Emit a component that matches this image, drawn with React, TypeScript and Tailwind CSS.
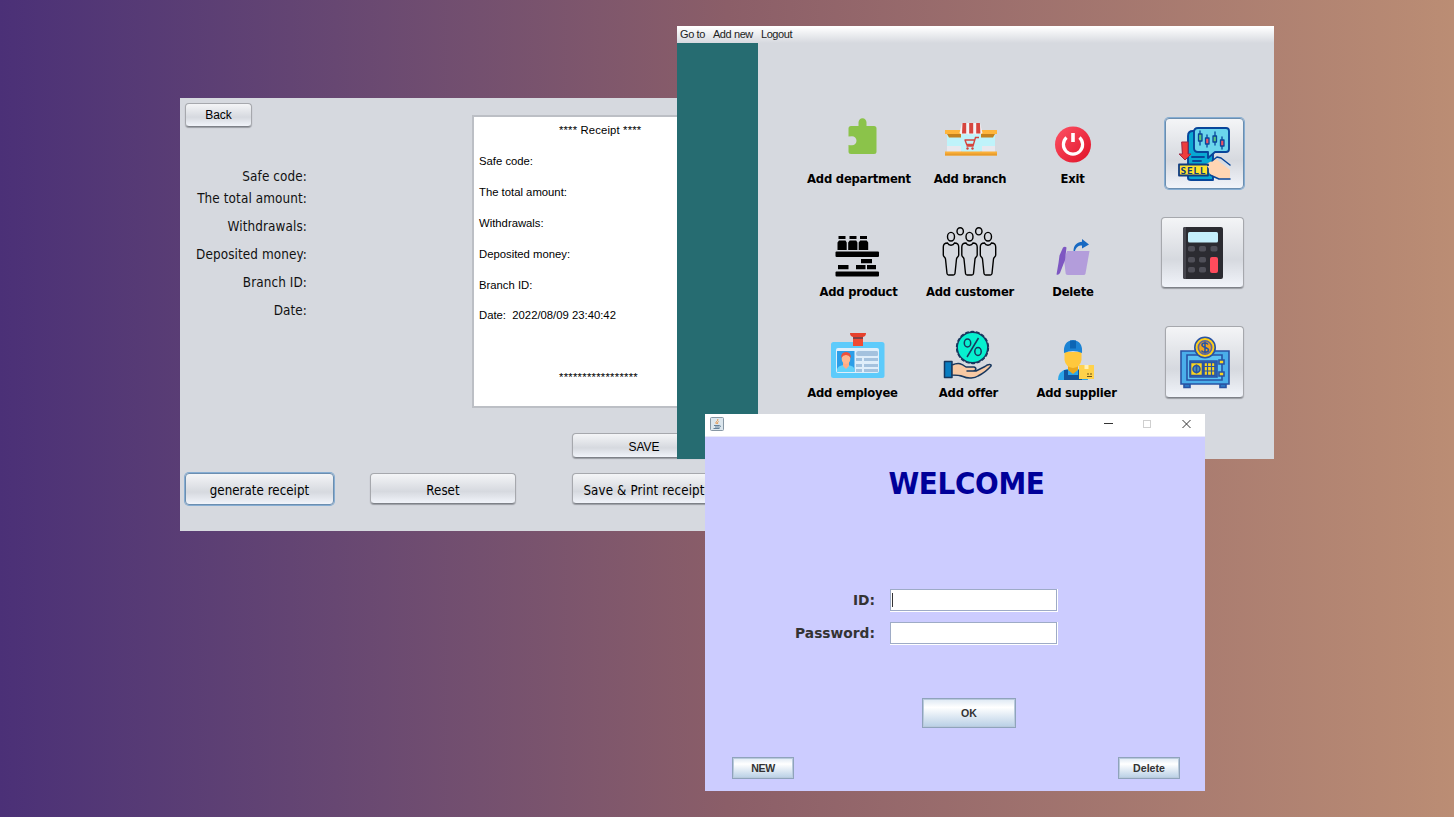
import type { ReactNode } from "react";

const tahoma = "font-['DejaVu_Sans_Condensed','DejaVu_Sans',sans-serif] [font-stretch:condensed]";
const tahomaBold = "font-['DejaVu_Sans',sans-serif] font-bold";
const arial = "font-['Liberation_Sans',sans-serif]";

function NimbusButton({ children, className, focused = false }: { children: ReactNode; className: string; focused?: boolean }) {
  const frame = focused
    ? "border-[#6b8eb0] shadow-[0_0_0_1px_#86add2]"
    : "border-[#a6a8ad] border-b-[#7e8188] shadow-[0_1px_1px_#9a9da3]";
  return (
    <button
      className={`flex shrink-0 items-center justify-center whitespace-nowrap rounded-[4px] border bg-linear-to-b from-[#f4f5f7] via-[#d6d9df] via-60% to-[#f1f4fa] text-black ${frame} ${className}`}
    >
      {children}
    </button>
  );
}

function MetalButton({ children, className }: { children: ReactNode; className: string }) {
  return (
    <button
      className={`flex items-center justify-center border border-[#8fa3bb] bg-linear-to-b from-[#dde8f3] via-white via-30% to-[#b8cfe5] pt-[2px] text-[10.6px] font-bold text-[#333333] shadow-[inset_0_0_0_1px_#b9cadc] ${arial} ${className}`}
    >
      {children}
    </button>
  );
}

const fields = [
  { label: "Safe code:", row: "h-[22px]" },
  { label: "The total amount:", row: "h-[22px] mb-[3px]" },
  { label: "Withdrawals:", row: "h-7" },
  { label: "Deposited money:", row: "h-7" },
  { label: "Branch ID:", row: "h-7" },
  { label: "Date:", row: "h-7" },
];

const receiptLines = [
  "Safe code:",
  "The total amount:",
  "Withdrawals:",
  "Deposited money:",
  "Branch ID:",
  "Date:  2022/08/09 23:40:42",
];

function ReceiptWindow() {
  return (
    <section className={`absolute left-[180px] top-[98px] flex h-[433px] w-[538px] flex-col bg-[#d6d9df] ${tahoma}`}>
      <div className="flex h-[328px]">
        <div className="w-[292px] pl-[5px] pt-[5px]">
          <NimbusButton className={`h-6 w-[67px] text-[12px] ${arial}`}>Back</NimbusButton>
          <div className="mt-[39px] w-[122px] text-right text-[13.4px] tracking-[0.1px] text-[#111]">
            {fields.map((f) => (
              <div key={f.label} className={`flex items-center justify-end whitespace-nowrap ${f.row}`}>
                {f.label}
              </div>
            ))}
          </div>
        </div>
        <div className={`mt-[17px] h-[293px] flex-1 border-2 border-[#bcbfc5] bg-white pl-[5px] text-[11.3px] text-black ${arial}`}>
          <div className="mb-[2px] flex h-[27px] items-center pl-[80px] tracking-[0.15px]">**** Receipt ****</div>
          {receiptLines.map((l) => (
            <div key={l} className="flex h-[30.9px] items-center whitespace-pre">
              {l}
            </div>
          ))}
          <div className="mt-[31px] flex h-[30px] items-center pl-[80px] tracking-[0.25px]">*****************</div>
        </div>
      </div>
      <div className="mt-[7px] flex justify-end pr-[2px]">
        <NimbusButton className={`h-[25px] w-[144px] pt-[2px] text-[12px] ${arial}`}>SAVE</NimbusButton>
      </div>
      <div className="mt-[15px] flex pl-[5px] text-[13.2px] tracking-[0.05px]">
        <NimbusButton focused className="h-8 w-[149px] pt-[3px]">generate receipt</NimbusButton>
        <NimbusButton className="ml-[36px] h-[31px] w-[146px] pt-[4px]">Reset</NimbusButton>
        <NimbusButton className="ml-[56px] h-[31px] w-[144px] pt-[4px] tracking-[0.15px]">Save &amp; Print receipt</NimbusButton>
      </div>
    </section>
  );
}

/* Each icon uses the drawing area of its grid cell: 112 x 56 with the cell centre at x = 56. */
function Puzzle() {
  return (
    <g fill="#8bc34a">
      <path d="M48 16h7.500V12.500a4 4.300 0 1 1 8 0V16H71q2.500 0 2.500 2.500v23Q73.500 44 71 44H48q-2.500 0-2.500-2.500V35q1 .2 3.500.2a4.500 4.500 0 1 0 0-9q-2.500 0-3.500.3v-8Q45.500 16 48 16z" />
    </g>
  );
}

function Store() {
  return (
    <g>
      <path d="M33 23h48v18H33z" fill="#bff3fa" />
      <path d="M33 36h14v6H33zM68 36h13v6H68z" fill="#e8e8ee" />
      <path d="M31 20h52v4H31z" fill="#ffb53b" />
      <path d="M33 24h14v3.500H35zM67 24h14l-2 3.500H67z" fill="#c4821d" />
      <path d="M48 23h18v19H48z" fill="#bff3fa" />
      <path d="M48 13h18l2.500 10q-2 2-4 .5-2 2-4 0-2 2-3.500 0-2 2-4 0-2 2-4 0-2 1.500-3.500-.5z" fill="#f4f2f5" />
      <path d="M48.500 13h3.700v10.500h-4.200zM55.200 13h4v10.500h-4zM62.200 13h3.700l.5 10.500h-4.200z" fill="#d6453e" />
      <g fill="none" stroke="#d6453e" strokeWidth="1.400">
        <path d="M65 27.500h-3.500L59 36h-6.500M50.500 30H61M51 30l1.700 4.500h6.700" />
      </g>
      <circle cx="53.500" cy="38.500" r="1.200" fill="#d6453e" />
      <circle cx="58.500" cy="38.500" r="1.200" fill="#d6453e" />
      <path d="M31 41.500h52v4H31z" fill="#fab03a" />
      <path d="M31 43.500h52v2H31z" fill="#e89c2c" />
    </g>
  );
}

function Power() {
  return (
    <g>
      <defs>
        <linearGradient id="power" x1="0" y1="0" x2="1" y2="1">
          <stop offset="0" stopColor="#fd5265" />
          <stop offset="1" stopColor="#e01227" />
        </linearGradient>
      </defs>
      <circle cx="57" cy="34.500" r="18" fill="url(#power)" />
      <path d="M50.500 27.500a9.600 9.600 0 1 0 13 0" fill="none" stroke="#fff" strokeWidth="3.200" />
      <path d="M57 23v9" stroke="#fff" strokeWidth="3.600" />
    </g>
  );
}

function Shelf() {
  return (
    <g fill="#000">
      <path d="M35.500 13h7v3h-7zM46.500 13h7v3h-7zM57 13h7v3h-7zM36 17.500h6.500l1.200 2V27H34.500v-7.500zM46.700 17.500h6.500l1.200 2V27h-9.200v-7.500zM57.200 17.500h6.500l1.500 2V27h-9.500v-7.500z" />
      <rect x="32.500" y="28.500" width="43.500" height="5.500" rx="1" />
      <rect x="32.500" y="48.500" width="43.500" height="5" rx="1" />
      <path d="M58 36h11v4.300H58zM35 42h10.500v4.300H35zM53 42h9.500v4.300H53zM64 42h9v4.300h-9z" />
    </g>
  );
}

const PERSON = "M-3.500 20c-3 0-4.200 1-4.200 4v8c0 2 1.700 2 2.200 4l1.500 14.500q.2 1.500 1.600 1.500h4.800q1.400 0 1.600-1.500L5.500 36c.5-2 2.200-2 2.200-4v-8c0-3-1.200-4-4.200-4q-1 2.200-3.500 2.200T-3.500 20z";

function People() {
  return (
    <g fill="none" stroke="#000" strokeWidth="1.400">
      {[37, 55.5, 74].map((x) => (
        <g key={x} transform={`translate(${x} 0)`}>
          <path d={PERSON} />
          <ellipse cx="0" cy="13.700" rx="3.500" ry="4.300" />
        </g>
      ))}
      <ellipse cx="46.200" cy="8.300" rx="3.200" ry="3.600" />
      <ellipse cx="64.800" cy="8.300" rx="3.200" ry="3.600" />
    </g>
  );
}

function Bin() {
  return (
    <g>
      <path d="M47 28h26.500l-4 22.500q-.3 1.500-2 1.500H52q-2 0-2.300-1.500z" fill="#b39ddb" />
      <path d="M45 28h6l-3 9-2 11z" fill="#d6d9df" />
      <path d="M47 24.500q2-1.500 3.500 0L49 37l-5 13q-1.500 2.500-3.500 1.500L42.500 40l1-7.500z" fill="#7e57c2" />
      <path d="M57.500 28c0-6 4-9 8.500-9.300V16l7 5.500-7 4v-3c-4 0-6 2-7 5.500z" fill="#1769c2" />
    </g>
  );
}

function Badge() {
  return (
    <g>
      <rect x="28" y="12" width="53.500" height="36" rx="2.500" fill="#5dcbfb" />
      <rect x="33" y="18" width="43" height="25" rx="2" fill="#dfeefa" />
      <path d="M34 21h17.500v21H34z" fill="#2c9ee8" />
      <path d="M34 42v-3q1-3 6-4h5q6 1 6.500 4v3z" fill="#62d2fa" />
      <path d="M40 32h6v4l-3 3-3-3z" fill="#ffab85" />
      <ellipse cx="43" cy="29" rx="4.300" ry="5" fill="#ffb68f" />
      <path d="M38 28q0-6 5-6t5 6q-2-3-5-3t-5 3z" fill="#f0503b" />
      <path d="M55 21h19q1 0 1 2v2q0 1-1 1H55q-2 0-2-2.500T55 21zM53 28h6v3h-6zM61 28h14v3H61zM53 34h6v3h-6zM61 34h14v3H61zM53 39h6v3h-6zM61 39h14v3H61z" fill="#a4c2de" />
      <path d="M50 6h10v10H50z" fill="#f04b34" />
      <path d="M47 3h16q0 4-4 4h-8q-4 0-4-4z" fill="#e6402c" />
      <path d="M50 7h10v2H50z" fill="#814247" />
    </g>
  );
}

function Offer() {
  return (
    <g stroke="#17375e" strokeWidth="1.500" strokeLinejoin="round">
      <circle cx="58.500" cy="17.500" r="15.300" fill="#07f0cf" />
      <circle cx="58.500" cy="17.500" r="16" fill="none" strokeWidth="1.300" strokeDasharray="4 1.600" />
      <path d="M64.500 8L53 27" />
      <ellipse cx="53.500" cy="13" rx="3.200" ry="4" fill="none" />
      <ellipse cx="64" cy="21.500" rx="3.200" ry="4" fill="none" />
      <path d="M30.500 31.500h7.500v16h-7.500z" fill="#087dc1" />
      <path d="M38 35c7-3 10-1 14 2h8c3 1 2 4-1 4h-6 9l9-4.500c3-2.500 7-2.500 6-.5-5 6-9 8-13 10-3 2-10 3-15 .5-4-1.500-7-1.500-11-1.500z" fill="#f7c9a4" />
    </g>
  );
}

function Supplier() {
  return (
    <g>
      <path d="M42 50q0-9 9-11h13q8 2 8 11z" fill="#2ba6e8" />
      <path d="M48 40h4v5h10v-5h4v10H48z" fill="#12559c" />
      <path d="M52 33h10v7l-5 4-5-4z" fill="#eba81e" />
      <path d="M48.500 22h17v8q-1 7-8.500 8-7.500-1-8.500-8z" fill="#ffc83d" />
      <path d="M48 23q-1-12 9-13 10 1 9 13-9-4-18 0z" fill="#1c83d4" />
      <path d="M54 10.500h6v8h-6z" fill="#0c65b4" />
      <path d="M63 35h15v14H63z" fill="#ffd24b" />
      <path d="M68.500 35h4v4h-4z" fill="#fff0b5" />
      <path d="M71 46.500h5M72 43v2M75 43v2" stroke="#6e5217" />
    </g>
  );
}

type Action = { label: string; icon: ReactNode; shift: string };

const rows: { height: string; gap: string; items: Action[] }[] = [
  {
    height: "h-[113px]",
    gap: "mt-[5px]",
    items: [
      { label: "Add department", icon: <Puzzle />, shift: "" },
      { label: "Add branch", icon: <Store />, shift: "" },
      { label: "Exit", icon: <Power />, shift: "pl-[1px]" },
    ],
  },
  {
    height: "h-[107px]",
    gap: "mt-[5px]",
    items: [
      { label: "Add product", icon: <Shelf />, shift: "pr-[1px]" },
      { label: "Add customer", icon: <People />, shift: "" },
      { label: "Delete", icon: <Bin />, shift: "pl-[2px]" },
    ],
  },
  {
    height: "h-[80px]",
    gap: "mt-[-1px]",
    items: [
      { label: "Add employee", icon: <Badge />, shift: "pr-[13px]" },
      { label: "Add offer", icon: <Offer />, shift: "pr-[3px]" },
      { label: "Add supplier", icon: <Supplier />, shift: "pl-[9px]" },
    ],
  },
];

function SellIcon() {
  return (
    <svg viewBox="0 0 54 56" className="h-[56px] w-[54px]" strokeLinejoin="round" strokeLinecap="round">
      <g stroke="#08459a" strokeWidth="1.900">
        <path d="M10 52V10q0-5 5-5h20v49H13q-3 0-3-2z" fill="#08a8d2" />
        <path d="M20 2h28q3 0 3 3v18q0 3-3 3H37l-7 6v-6H20q-4 0-4-4V6q0-4 4-4z" fill="#6bd5ec" />
        <path d="M22 5v14M29 9v12M37 6v13M44 11v12" strokeWidth="1.300" />
        <path d="M20.500 8h3.500v7h-3.500zM35 10h3.500v6H35z" fill="#5ac47a" strokeWidth="1.300" />
        <path d="M27.500 12H31v6h-3.500zM42.500 14H46v6h-3.500z" fill="#ed5265" strokeWidth="1.300" />
        <path d="M14 31h12M15 35h8" />
      </g>
      <path d="M4 16h6v12h3l-6 6-6-6h3z" fill="#ee3d3d" stroke="#9f2945" />
      <path d="M28 38l10-5 14 11v9H42l-9-4-6-8q-1-2 1-3z" fill="#ffd5b3" />
      <path d="M34 35l5-4 4 1 9 7M32 49l9 4h11" fill="none" stroke="#08459a" strokeWidth="1.500" />
      <path d="M1 38.500h29v11H1z" fill="#ffe22c" stroke="#103c80" strokeWidth="1.800" />
      <text x="15" y="47.500" textAnchor="middle" fontSize="9.500" fontWeight="700" fill="#103c80" fontFamily="DejaVu Sans Mono, monospace" textLength="25">
        SELL
      </text>
      <path d="M29 40l9 0-2 5-4-1z" fill="#ffd5b3" />
    </svg>
  );
}

function CalculatorIcon() {
  return (
    <svg viewBox="0 0 40 54" className="h-[54px] w-[40px]">
      <rect x="0" y="1" width="40" height="52" rx="2" fill="#2b2b31" />
      <path d="M0 3q0-2 2-2h1v52H2q-2 0-2-2z" fill="#45454d" />
      <rect x="5" y="6" width="30" height="10.500" rx="1.500" fill="#c5effb" />
      <g fill="#505059">
        {[20, 31, 41].map((y) =>
          [5, 16, 27.5].map((x) => (x === 27.5 && y > 20 ? null : <rect key={`${x}-${y}`} x={x} y={y} width="7" height="5.500" rx="1.800" />)),
        )}
      </g>
      <rect x="27" y="31" width="8" height="16" rx="2" fill="#ff4b5c" />
    </svg>
  );
}

function SafeIcon() {
  return (
    <svg viewBox="0 0 50 56" className="h-[56px] w-[50px]">
      <g stroke="#2853a4" strokeWidth="1.600">
        <path d="M4 50h6v3.500H4zM40 50h6v3.500h-6z" fill="#2d79c7" />
        <path d="M1 17h48v33H1z" fill="#4aaeea" />
        <path d="M7 21h35v25H7z" fill="#5dc3f3" />
        <path d="M10 27h27v16H10z" fill="#3a8bd2" />
        <path d="M10.500 28.500h12v13h-12zM24 28.500h11v13H24z" fill="#f9d51f" />
        <path d="M27.500 29v12M31.500 29v12M24 32.500h11M24 37h11" strokeWidth="1.200" />
        <circle cx="16.500" cy="35" r="3.500" fill="#4a92ba" />
        <path d="M16.500 30.500v9" />
        <path d="M39 26h5v4h-5zM39 38h5v4h-5z" fill="#f9d51f" />
        <circle cx="25" cy="13.500" r="10.200" fill="#ffcf18" />
        <circle cx="25" cy="13.500" r="6.700" fill="#eda322" stroke="#5b65a0" />
      </g>
      <path d="M28 10.500c-1-2-6-2-6 .5 0 3 6.500 2 6.500 5 0 3-6 3-7 .5M25 7.500v12" fill="none" stroke="#2853a4" strokeWidth="1.600" />
    </svg>
  );
}

function DashboardWindow() {
  return (
    <section className="absolute left-[677px] top-[26px] flex h-[433px] w-[597px] flex-col bg-[#d6d9df]">
      <nav className={`flex h-[17px] shrink-0 items-center gap-[8px] border-t border-white bg-linear-to-b from-white to-[#d6d9df] pb-px pl-[3px] text-[11px] tracking-[-0.4px] text-[#222] ${arial}`}>
        <span>Go to</span>
        <span>Add new</span>
        <span>Logout</span>
      </nav>
      <div className="flex flex-1">
        <aside className="w-[81px] bg-[#266c71]" />
        <main className={`ml-[45px] w-[316px] pt-[67px] text-[11.6px] tracking-[-0.22px] text-black ${tahomaBold}`}>
          {rows.map((row) => (
            <div key={row.height} className={`grid grid-cols-[112px_110px_94px] ${row.height}`}>
              {row.items.map((item) => (
                <div key={item.label} className="flex flex-col items-center">
                  <svg viewBox="0 0 112 56" className="h-[56px] w-[112px] shrink-0">
                    {item.icon}
                  </svg>
                  <span className={`flex h-[18px] items-center whitespace-nowrap ${row.gap} ${item.shift}`}>{item.label}</span>
                </div>
              ))}
            </div>
          ))}
        </main>
        <div className="ml-[42px] flex flex-col items-end pt-[75px]">
          <NimbusButton focused className="h-[71px] w-[79px]"><SellIcon /></NimbusButton>
          <NimbusButton className="mt-[28px] h-[71px] w-[83px]"><CalculatorIcon /></NimbusButton>
          <NimbusButton className="mt-[38px] h-[72px] w-[79px]"><SafeIcon /></NimbusButton>
        </div>
      </div>
    </section>
  );
}

function LoginField({ label, caret = false }: { label: string; caret?: boolean }) {
  return (
    <div className="flex items-center">
      <span className="mr-[15px] w-[170px] text-right">{label}</span>
      <div className="flex h-[23px] w-[168px] items-center border-b border-r border-white">
        <div className="flex h-full w-full items-center border border-[#9eabc6] bg-white pl-px">
          {caret && <span className="h-[14px] w-px bg-[#333]" />}
        </div>
      </div>
    </div>
  );
}

function LoginWindow() {
  return (
    <section className="absolute left-[705px] top-[414px] flex h-[377px] w-[500px] flex-col bg-[#ccccff]">
      <header className="flex h-[23px] shrink-0 items-center justify-between border-b border-[#e9e9fb] bg-white pl-[5px] pr-[13px]">
        <svg viewBox="0 0 14 14" className="mb-[2px] h-[14px] w-[14px]">
          <rect x=".5" y=".5" width="13" height="13" rx="1" fill="#dce6ed" stroke="#8797a4" />
          <path d="M7.500 2c1.500 2-3 2.500-1 5M8.500 4.500c-1 1-1.500 1.500-.5 2.500" fill="none" stroke="#ec8c35" />
          <path d="M4 8.500h5.500M5 10h4M3.500 11.500h6M9.500 8.500q2 0 0 2" fill="none" stroke="#56758e" strokeWidth=".9" />
        </svg>
        <svg viewBox="0 0 90 12" className="mb-[2px] h-[12px] w-[90px]" fill="none" strokeWidth="1">
          <path d="M2 5.500h9" stroke="#333" />
          <rect x="41.500" y="2.500" width="7" height="7" stroke="#cfcfcf" />
          <path d="M80.500 2l8 8M88.500 2l-8 8" stroke="#333" />
        </svg>
      </header>
      <h1 className={`mt-[26px] pl-[23px] text-center text-[31px] font-bold leading-[40px] tracking-[-0.35px] text-[#000099] ${tahoma}`}>WELCOME</h1>
      <div className={`mt-[86px] flex flex-col gap-[10px] text-[13.8px] text-[#333] ${tahomaBold}`}>
        <LoginField label="ID:" caret />
        <LoginField label="Password:" />
      </div>
      <MetalButton className="ml-[217px] mt-[53px] h-[30px] w-[94px]">OK</MetalButton>
      <footer className="mt-[29px] flex justify-between pl-[27px] pr-[25px]">
        <MetalButton className="h-[22px] w-[62px] tracking-[-0.4px]">NEW</MetalButton>
        <MetalButton className="h-[22px] w-[62px]">Delete</MetalButton>
      </footer>
    </section>
  );
}

export default function App() {
  return (
    <div className="relative h-[817px] w-[1454px] overflow-hidden bg-linear-to-r from-[#4b3077] via-[#8b5e68] to-[#bb8d74]">
      <ReceiptWindow />
      <DashboardWindow />
      <LoginWindow />
    </div>
  );
}
